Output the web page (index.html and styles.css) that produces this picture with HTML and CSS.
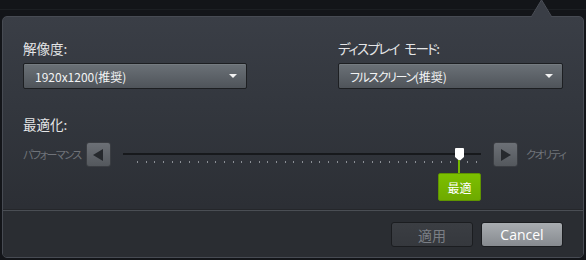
FILE: index.html
```html
<!DOCTYPE html>
<html lang="ja">
<head>
<meta charset="utf-8">
<link rel="stylesheet" href="styles.css">
</head>
<body>
<div class="page">
  <svg class="arrow" width="21" height="18" viewBox="0 0 21 18"><path d="M0.5 18 L10.5 0.8 L20.5 18 Z" fill="#3a3e46"/><path d="M0.5 17.5 L10.5 0.8 L20.5 17.5" fill="none" stroke="#4b4f57" stroke-width="1"/></svg>
  <div class="panel">
    <div class="content">
      <div class="cols">
        <div class="field">
          <div class="label">解像度:</div>
          <div class="select"><span>1920x1200(推奨)</span><i class="caret"></i></div>
        </div>
        <div class="field">
          <div class="label"><span class="kana">ディスプレイ モード</span>:</div>
          <div class="select"><span><span class="kana2">フルスクリーン</span>(推奨)</span><i class="caret"></i></div>
        </div>
      </div>
      <div class="label opt">最適化:</div>
      <div class="slider-row">
        <span class="side left">パフォーマンス</span>
        <div class="step"><svg width="11" height="12" viewBox="0 0 11 12"><path d="M10 0 L10 12 L0 6 Z" fill="#26292d"/></svg></div>
        <div class="track">
          <div class="line"></div>
          <div class="ticks">
            <i></i><i></i><i></i><i></i><i></i><i></i><i></i><i></i><i></i><i></i>
            <i></i><i></i><i></i><i></i><i></i><i></i><i></i><i></i><i></i><i></i>
            <i></i><i></i><i></i><i></i><i></i><i></i><i></i><i></i><i></i><i></i>
            <i></i><i></i><i></i><i></i><i></i><i></i><i></i><i></i><i></i><i></i>
          </div>
          <svg class="thumb" width="9" height="13" viewBox="0 0 9 13"><path d="M1 0 H8 Q9 0 9 1 V9 L4.5 13 L0 9 V1 Q0 0 1 0 Z" fill="#ffffff"/></svg>
          <div class="stem"></div>
          <div class="tip">最適</div>
        </div>
        <div class="step"><svg width="11" height="12" viewBox="0 0 11 12"><path d="M1 0 L1 12 L11 6 Z" fill="#26292d"/></svg></div>
        <span class="side right">クオリティ</span>
      </div>
    </div>
    <div class="footer">
      <div class="btn disabled">適用</div>
      <div class="btn cancel">Cancel</div>
    </div>
  </div>
</div>
</body>
</html>
```
FILE: styles.css
```css
html, body {
  margin: 0;
  padding: 0;
}
body {
  width: 586px;
  height: 260px;
  overflow: hidden;
  background: linear-gradient(#131519 0, #131519 9px, #1c1f23 9px, #1c1f23 10px, #131519 10px);
  font-family: "Noto Sans CJK JP", "Noto Sans", sans-serif;
  font-feature-settings: "palt";
}
.page {
  position: relative;
  padding: 16px 2px 0 2px;
  height: 244px;
}
.arrow {
  position: absolute;
  left: 531px;
  top: -1px;
  z-index: 2;
}
.panel {
  height: 240px;
  border: 1px solid #474b53;
  border-radius: 5px;
  background: linear-gradient(#3a3e46 0, #33373e 90px, #2c2f35 190px);
  display: flex;
  flex-direction: column;
  overflow: hidden;
}
.content {
  height: 193px;
  padding: 21px 20px 0 20px;
  box-sizing: border-box;
}
.cols {
  display: grid;
  grid-template-columns: 224px 225px;
  column-gap: 91px;
}
.label {
  font-size: 13.5px;
  line-height: 20px;
  color: #e4e5e6;
  white-space: nowrap;
}
.kana {
  letter-spacing: -1.6px;
  word-spacing: 4px;
}
.kana2 {
  letter-spacing: -1.4px;
}
.select {
  margin-top: 5px;
  height: 26px;
  box-sizing: border-box;
  border: 1px solid #1d1f22;
  border-radius: 2px;
  background: linear-gradient(#6b7177, #4f545a);
  box-shadow: inset 0 1px 0 rgba(255,255,255,0.08);
  display: flex;
  align-items: center;
  justify-content: space-between;
  padding: 0 9px 0 11px;
  color: #f2f3f4;
  font-size: 12px;
}
.caret {
  width: 0;
  height: 0;
  border-left: 4px solid transparent;
  border-right: 4px solid transparent;
  border-top: 4px solid #f2f2f2;
}
.opt {
  margin-top: 25px;
}
.slider-row {
  margin-top: 8px;
  height: 25px;
  display: flex;
  align-items: center;
}
.slider-row > * {
  flex-shrink: 0;
}
.side {
  font-size: 11px;
  color: #6f7379;
  line-height: 25px;
  white-space: nowrap;
  letter-spacing: -1.5px;
}
.side.left {
  width: 63px;
}
.side.right {
  margin-left: 8px;
}
.step {
  width: 25px;
  height: 25px;
  box-sizing: border-box;
  border-radius: 3px;
  border: 1px solid #3a3d42;
  background: linear-gradient(#6c7076, #54585d);
  display: flex;
  align-items: center;
  justify-content: center;
}
.track {
  position: relative;
  width: 358px;
  height: 25px;
  margin: 0 12px;
}
.line {
  position: absolute;
  left: 0;
  right: 0;
  top: 11px;
  height: 2px;
  background: #17191c;
}
.ticks {
  position: absolute;
  left: 14px;
  right: 4px;
  top: 19px;
  height: 2px;
  display: flex;
  justify-content: space-between;
}
.ticks i {
  width: 1px;
  height: 2px;
  background: #8b8f95;
}
.thumb {
  position: absolute;
  left: 332px;
  top: 6px;
}
.stem {
  position: absolute;
  left: 335px;
  top: 18px;
  width: 2px;
  height: 13px;
  background: #76b900;
}
.tip {
  position: absolute;
  left: 315px;
  top: 31px;
  width: 43px;
  height: 28px;
  box-sizing: border-box;
  border-radius: 2px;
  border: 1px solid #5f9400;
  background: linear-gradient(#7cc000, #6eaa00);
  color: #ffffff;
  font-size: 12px;
  display: flex;
  align-items: center;
  justify-content: center;
}
.footer {
  flex: 1;
  border-top: 1px solid #4a4e54;
  box-shadow: 0 -1px 0 #25272b;
  background: #2a2d32;
  display: flex;
  justify-content: flex-end;
  align-items: flex-start;
  gap: 8px;
  padding: 11px 20px 0 0;
}
.btn {
  width: 82px;
  height: 25px;
  box-sizing: border-box;
  border-radius: 3px;
  border: 1px solid #1b1d20;
  display: flex;
  align-items: center;
  justify-content: center;
  font-size: 14px;
}
.disabled {
  background: linear-gradient(#3b3e43, #35383d);
  color: #7b7f85;
}
.cancel {
  background: linear-gradient(#a9adb1, #868a8f);
  color: #ffffff;
  font-family: "Open Sans", "Noto Sans", sans-serif;
  font-size: 14px;
}
```
